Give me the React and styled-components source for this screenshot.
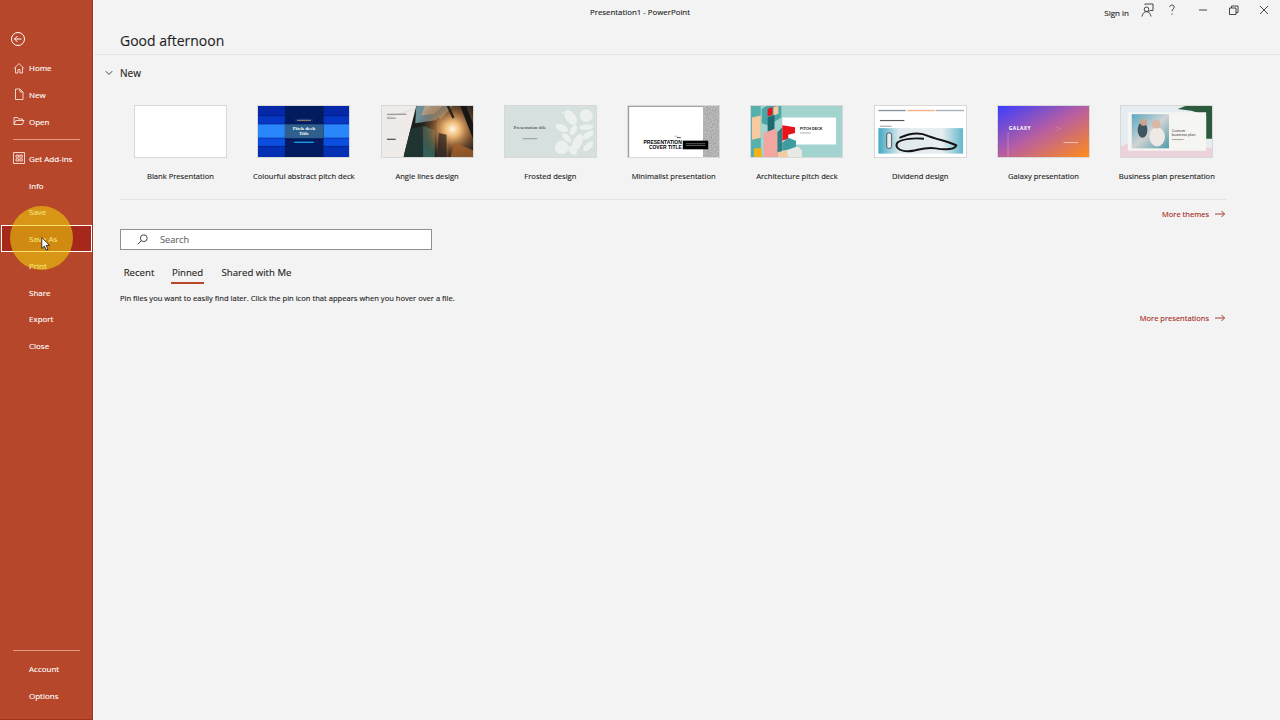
import styled, { createGlobalStyle } from 'styled-components'

const GlobalStyle = createGlobalStyle`
    html, body, #root {
        margin: 0;
        height: 100%;
    }
    body {
        overflow: hidden;
        background-color: #f3f3f3;
        font-family: "Open Sans", "Noto Sans", "Liberation Sans", sans-serif;
        color: #222222;
        -webkit-text-stroke: 0.12px currentColor;
    }
`;

const Page = styled.div`
    width: 1280px;
    height: 720px;
    display: flex;
    flex-direction: row;
    position: relative;
    overflow: hidden;
`;

const Sidebar = styled.nav`
    width: 92px;
    height: 719px;
    flex-shrink: 0;
    display: flex;
    flex-direction: column;
    background-color: #b7472a;
    border-right: 1px solid #a5301c;
    border-bottom: 1px solid #a5301c;
    color: #ffffff;
`;

const BackButton = styled.div`
    height: 24px;
    margin: 27px 0 3.600px 11px;
    display: flex;
    align-items: center;
`;

const SideItem = styled.div`
    height: 26.7px;
    flex-shrink: 0;
    display: flex;
    align-items: center;
    position: relative;
    font-size: 8px;
    box-sizing: border-box;
    background-color: ${p => (p.$active ? '#a5281b' : 'transparent')};
    outline: ${p => (p.$active ? '1px solid #ffffff' : 'none')};
    outline-offset: -1px;
    margin-left: ${p => (p.$active ? '1px' : '0')};
    padding-left: ${p => (p.$active ? '28px' : '29px')};
`;

const SideIcon = styled.svg`
    position: absolute;
    left: 13px;
    top: 7px;
    width: 12px;
    height: 12px;
    fill: none;
    stroke: #f7e3dc;
    stroke-width: 0.9;
`;

const SideDivider = styled.div`
    height: 1px;
    width: 67px;
    margin: ${p => p.$margin};
    background-color: #e59a82;
`;

const BottomGroup = styled.div`
    margin-top: auto;
    padding-bottom: 10px;
`;

const Spotlight = styled.div`
    position: absolute;
    left: 10px;
    top: 206px;
    width: 63px;
    height: 64px;
    border-radius: 50%;
    background-color: rgba(238, 204, 12, 0.6);
    pointer-events: none;
`;

const Cursor = styled.svg`
    position: absolute;
    left: 40.500px;
    top: 236.500px;
    width: 9px;
    height: 14px;
    pointer-events: none;
`;

const Main = styled.main`
    flex: 1;
    min-width: 0;
    display: flex;
    flex-direction: column;
    border-left: 1px solid #fbfbfb;
`;

const TitleBar = styled.header`
    height: 24px;
    display: flex;
    align-items: center;
    padding-left: 496px;
    font-size: 7.85px;
`;

const WindowTitle = styled.span`
    white-space: nowrap;
`;

const WindowActions = styled.div`
    margin-left: auto;
    display: flex;
    align-items: center;
`;

const SignIn = styled.span`
    margin-right: 3px;
    font-size: 8px;
`;

const WindowIcon = styled.svg`
    width: ${p => p.$width || '30px'};
    height: 14px;
    fill: none;
    stroke: #333333;
    stroke-width: 0.9;
    margin: -4px ${p => p.$gap || '0'} 0 0;
`;

const Greeting = styled.div`
    height: 31px;
    display: flex;
    align-items: center;
    padding: 2px 0 0 26px;
    font-size: 14px;
    color: #1f1f1f;
    border-bottom: 1px solid #e6e6e6;
    box-sizing: border-box;
`;

const Content = styled.section`
    padding: 0 54px 0 26px;
    display: flex;
    flex-direction: column;
`;

const SectionHeader = styled.div`
    height: 36px;
    display: flex;
    align-items: center;
    font-size: 10px;
    position: relative;
`;

const Chevron = styled.svg`
    position: absolute;
    left: -15px;
    top: 15px;
    width: 8px;
    height: 6px;
    fill: none;
    stroke: #444444;
    stroke-width: 1;
`;

const TemplateRow = styled.div`
    display: grid;
    grid-template-columns: repeat(9, 123.3px);
    margin: 14px 0 0 -1.2px;
    height: 94px;
`;

const Template = styled.div`
    display: flex;
    flex-direction: column;
    align-items: center;
`;

const Thumb = styled.svg`
    width: 91px;
    height: 51px;
    margin: 1px;
    display: block;
    box-shadow: 0 0 0 1px #d8d8d8;
    background-color: #ffffff;
`;

const Caption = styled.span`
    margin-top: 13px;
    font-size: 7.6px;
    line-height: 11px;
    color: #222222;
    white-space: nowrap;
`;

const RowDivider = styled.div`
    height: 1px;
    background-color: #e3e3e3;
`;

const MoreLink = styled.div`
    display: flex;
    justify-content: flex-end;
    align-items: center;
    gap: 6px;
    font-size: 7.55px;
    color: #a5281b;
    height: 12px;
    padding-right: 1px;
    margin-top: ${p => p.$top};
`;

const Arrow = styled.svg`
    width: 10px;
    height: 8px;
    fill: none;
    stroke: #a5281b;
    stroke-width: 0.9;
`;

const SearchBox = styled.div`
    width: 312px;
    height: 21px;
    margin-top: 9px;
    display: flex;
    align-items: center;
    background-color: #ffffff;
    border: 1px solid #8f8f8f;
    box-sizing: border-box;
    padding-left: 16px;
    gap: 12px;
    font-size: 9.2px;
    color: #666666;
`;

const SearchIcon = styled.svg`
    width: 11px;
    height: 11px;
    fill: none;
    stroke: #444444;
    stroke-width: 1;
`;

const Tabs = styled.div`
    display: flex;
    margin-top: 13px;
    padding-left: 4px;
    height: 21px;
    font-size: 9.6px;
`;

const Tab = styled.div`
    display: flex;
    align-items: flex-start;
    justify-content: center;
    box-sizing: border-box;
    white-space: nowrap;
    width: ${p => p.$width};
    margin-right: ${p => p.$gap};
    height: 21px;
    padding-top: 3px;
    line-height: 14px;
    border-bottom: ${p => (p.$active ? '2px solid #b7472a' : '0')};
`;

const Hint = styled.p`
    margin: 9px 0 0;
    font-size: 7.6px;
    line-height: 11px;
    color: #222222;
    white-space: nowrap;
`;

const navTop = [
    {
        label: 'Home',
        icon: <path d="M1 6.500 6 1.500l5 5M2.500 5.500V11H5V7.500h2V11h2.500V5.500" />,
    },
    {
        label: 'New',
        icon: <path d="M2.500 1h4.500l3 3v7.500h-7.500zM7 1v3h3" />,
    },
    {
        label: 'Open',
        icon: <path d="M1 9.500V2.500h3.500l1 1.500h4v1.500M1 9.500l1.800-4h8.200l-1.800 4z" />,
    },
];

const navMiddle = [
    {
        label: 'Get Add-ins',
        icon: <path d="M.5.500h11v11H.5zM3 3h2.500v2.200H3zM6.800 3h2.500v2.200H6.800zM3 6.800h2.500V9H3zM6.800 6.800h2.500V9H6.800z" />,
    },
    { label: 'Info' },
    { label: 'Save' },
    { label: 'Save As', active: true },
    { label: 'Print' },
    { label: 'Share' },
    { label: 'Export' },
    { label: 'Close' },
];

const templates = [
    { name: 'Blank Presentation', art: null },
    { name: 'Colourful abstract pitch deck', art: <PitchDeckArt /> },
    { name: 'Angle lines design', art: <AngleLinesArt /> },
    { name: 'Frosted design', art: <FrostedArt /> },
    { name: 'Minimalist presentation', art: <MinimalistArt /> },
    { name: 'Architecture pitch deck', art: <ArchitectureArt /> },
    { name: 'Dividend design', art: <DividendArt /> },
    { name: 'Galaxy presentation', art: <GalaxyArt /> },
    { name: 'Business plan presentation', art: <BusinessArt /> },
];

function PitchDeckArt() {
    const stripes = [
        [0, 10, '#0428a8'], [10.500, 8, '#0636c4'], [19, 14, '#2a86fb'],
        [33.500, 8, '#0a4fe0'], [42, 11, '#0430b4'],
    ];
    return (
        <>
            <rect width="93" height="53" fill="#03136e" />
            {stripes.map(([y, h, c]) => (
                <rect key={y} x="0" y={y} width="93" height={h} fill={c} />
            ))}
            <rect x="27.500" y="0" width="39.500" height="53" fill="#021a5e" />
            <rect x="27.500" y="19" width="39.500" height="14.500" fill="#2f5f8c" />
            <rect x="37.500" y="13" width="19" height="3.500" fill="#0a2a70" />
            <rect x="40" y="14.400" width="14" height="0.800" fill="#e0a060" />
            <text x="47" y="24.500" fontSize="5.200" fontFamily="Liberation Serif" fill="#fff" textAnchor="middle" fontWeight="bold">Pitch deck</text>
            <text x="47" y="30.300" fontSize="5.200" fontFamily="Liberation Serif" fill="#fff" textAnchor="middle" fontWeight="bold">Title</text>
            <rect x="37" y="37" width="20" height="1.400" fill="#1d9ff0" />
        </>
    );
}

function AngleLinesArt() {
    return (
        <>
            <defs>
                <radialGradient id="sun" gradientUnits="userSpaceOnUse" cx="72" cy="24" r="36">
                    <stop offset="0" stopColor="#fff8e4" />
                    <stop offset="0.22" stopColor="#f8c078" stopOpacity="0.95" />
                    <stop offset="0.55" stopColor="#b8723a" stopOpacity="0.6" />
                    <stop offset="1" stopColor="#3a2c20" stopOpacity="0" />
                </radialGradient>
                <clipPath id="photoClip">
                    <polygon points="35,0 93,0 93,53 22,53" />
                </clipPath>
            </defs>
            <rect width="93" height="53" fill="#efebe9" />
            <g clipPath="url(#photoClip)">
                <rect width="93" height="53" fill="#1a1d1e" />
                <polygon points="35,0 72,0 60,14 34,18" fill="#6e8f96" />
                <polygon points="44,0 62,0 54,8 40,10" fill="#b9a48a" />
                <polygon points="28,24 46,20 50,53 20,53" fill="#1f3331" />
                <polygon points="42,21 54,25 54,53 42,53" fill="#33615a" />
                <polygon points="56,12 66,15 68,53 56,53" fill="#4a4038" />
                <rect width="93" height="53" fill="url(#sun)" />
                <polygon points="80,0 86,0 93,18 93,34" fill="#171513" />
                <polygon points="66,0 69,0 74,12 72,13" fill="#2a2118" />
                <polygon points="58,28 66,30 66,53 56,53" fill="#2c2620" opacity="0.75" />
                <polygon points="74,38 93,46 93,53 70,53" fill="#a4622a" opacity="0.8" />
            </g>
            <polygon points="5,11 34,3 34,4 5,12" fill="#dcd8d5" />
            <rect x="5" y="8" width="20" height="1.300" fill="#9a9a9a" />
            <rect x="5" y="12" width="9" height="1.300" fill="#9a9a9a" />
            <rect x="5" y="34" width="9" height="1.200" fill="#444" />
        </>
    );
}

function FrostedArt() {
    const leaves = [
        [67, 12, 5, 9, -35], [83, 10, 6.500, 6.500, 50], [58, 23, 3.500, 7, -65], [83, 22, 3, 7, 85],
        [70, 25, 3, 5.500, 30], [58, 43, 7, 7, 40], [74, 38, 4.500, 9.500, 25], [85, 30, 3, 6.500, 55],
        [85, 42, 3, 6.500, 45], [63, 33, 3, 6, -45], [59, 7, 1, 1, 0], [69, 46, 3.500, 5.500, -40],
    ];
    return (
        <>
            <rect width="93" height="53" fill="#d6e1df" />
            {leaves.map(([cx, cy, rx, ry, a]) => (
                <ellipse key={`${cx}-${cy}`} cx={cx} cy={cy} rx={rx} ry={ry} fill="#ecf1f0" transform={`rotate(${a} ${cx} ${cy})`} />
            ))}
            <text x="9" y="23.500" fontSize="4.900" fontFamily="Liberation Serif" fill="#222">Presentation title</text>
            <rect x="18" y="33.500" width="15" height="1" fill="#8f9a98" />
        </>
    );
}

function MinimalistArt() {
    return (
        <>
            <defs>
                <filter id="grain" x="0" y="0" width="100%" height="100%">
                    <feTurbulence type="fractalNoise" baseFrequency="0.8" numOctaves="2" />
                    <feColorMatrix type="saturate" values="0" />
                    <feComponentTransfer>
                        <feFuncR type="linear" slope="0.500" intercept="0.200" />
                        <feFuncG type="linear" slope="0.500" intercept="0.200" />
                        <feFuncB type="linear" slope="0.500" intercept="0.200" />
                        <feFuncA type="linear" slope="0" intercept="1" />
                    </feComponentTransfer>
                </filter>
            </defs>
            <rect width="93" height="53" fill="#ffffff" />
            <rect width="1.200" height="53" fill="#a0a0a0" />
            <rect width="93" height="1" fill="#a0a0a0" />
            <rect x="77" width="16" height="53" fill="#777" filter="url(#grain)" />
            <rect x="56" y="36" width="26" height="9" fill="#000" />
            <rect x="59" y="39" width="20" height="0.600" fill="#999" />
            <rect x="59" y="41" width="20" height="0.600" fill="#999" />
            <text x="55" y="39.600" fontSize="5.100" fontFamily="Liberation Sans" fontWeight="bold" fill="#000" textAnchor="end">PRESENTATION</text>
            <text x="55" y="44.800" fontSize="5.100" fontFamily="Liberation Sans" fontWeight="bold" fill="#000" textAnchor="end">COVER TITLE</text>
            <rect x="47" y="31" width="4" height="0.600" fill="#999" />
            <rect x="50" y="32.500" width="4" height="0.800" fill="#222" />
        </>
    );
}

function ArchitectureArt() {
    return (
        <>
            <rect width="93" height="53" fill="#a3d3cf" />
            <rect x="32" y="12" width="55" height="28" fill="#ffffff" />
            <text x="50" y="24.500" fontSize="3.800" fontFamily="Liberation Sans" fontWeight="bold" fill="#111">PITCH DECK</text>
            <rect x="50" y="27.500" width="11" height="1" fill="#aaa" />
            <rect x="0" y="0" width="10" height="53" fill="#56b0ae" />
            <polygon points="1,12 10,10 10,33 1,35" fill="#f6cba0" />
            <polygon points="11,3 16,0 31,0 31,12 18,20 11,18" fill="#4aa6a6" />
            <polygon points="17,3 22,1 22,9 17,11" fill="#e8141c" />
            <polygon points="23,1 28,0 28,8 23,10" fill="#f6cba0" />
            <polygon points="17,12 24,9 24,24 17,28" fill="#1f6a70" />
            <polygon points="13,28 24,24 27,27 27,53 13,53" fill="#f3a6a0" />
            <polygon points="27,27 32,22 32,46 27,53" fill="#2f7f84" />
            <polygon points="32,20 45,22 45,28 38,30 38,34 32,36" fill="#e8141c" />
            <polygon points="38,33 46,36 46,42 38,46 32,46 32,38" fill="#3f9ca0" />
            <polygon points="36,46 48,42 52,46 52,53 38,53" fill="#e8e8e4" />
            <polygon points="3,44 11,44 11,53 3,53" fill="#f2b21c" />
            <polygon points="27,48 36,46 38,53 27,53" fill="#f6cba0" />
        </>
    );
}

function DividendArt() {
    return (
        <>
            <defs>
                <linearGradient id="desk" x1="0" y1="0" x2="1" y2="0">
                    <stop offset="0" stopColor="#42a9c2" />
                    <stop offset="0.25" stopColor="#dfe9ee" />
                    <stop offset="0.75" stopColor="#e8eef1" />
                    <stop offset="1" stopColor="#62b6cb" />
                </linearGradient>
            </defs>
            <rect width="93" height="53" fill="#ffffff" />
            <rect x="3.500" y="4" width="28" height="1.400" fill="#8b95a1" />
            <rect x="33" y="4" width="28" height="1.400" fill="#f4b183" />
            <rect x="62" y="4" width="29" height="1.400" fill="#a5adb5" />
            <rect x="5" y="14.500" width="25" height="1.200" fill="#555" />
            <rect x="5" y="20.500" width="12" height="1" fill="#999" />
            <rect x="3.500" y="23" width="86.500" height="26.500" fill="url(#desk)" />
            <path d="M25 33C36 28 46 27 54 31 64 35 76 37 83 41 82 45 72 46 62 44 50 42 42 47 34 47 24 47 20 42 23 38 28 34 40 33 50 34" fill="none" stroke="#141414" strokeWidth="2" />
            <rect x="12" y="28" width="5" height="16" rx="2" fill="#e8edf0" stroke="#333" strokeWidth="0.8" />
        </>
    );
}

function GalaxyArt() {
    return (
        <>
            <defs>
                <linearGradient id="galaxy" x1="0" y1="0" x2="1" y2="1">
                    <stop offset="0" stopColor="#3a3dff" />
                    <stop offset="0.5" stopColor="#b95f9f" />
                    <stop offset="1" stopColor="#ff8c1a" />
                </linearGradient>
            </defs>
            <rect width="93" height="53" fill="url(#galaxy)" />
            <text x="11" y="25" fontSize="5" fontFamily="Open Sans" fontWeight="bold" fill="#fff" letterSpacing="0.500">GALAXY</text>
            <rect x="67" y="37.500" width="15" height="1" fill="#f8d9c6" opacity="0.8" />
            <rect x="10" y="27" width="0.500" height="26" fill="#ffffff" opacity="0.5" />
            <circle cx="61" cy="22" r="0.400" fill="#fff" />
            <circle cx="63.500" cy="23.500" r="0.400" fill="#fff" />
            <circle cx="61" cy="25" r="0.400" fill="#fff" />
        </>
    );
}

function BusinessArt() {
    return (
        <>
            <defs>
                <linearGradient id="team" x1="0" y1="0" x2="1" y2="1">
                    <stop offset="0" stopColor="#5aa8c0" />
                    <stop offset="0.5" stopColor="#cfd3d4" />
                    <stop offset="1" stopColor="#4f9aa8" />
                </linearGradient>
            </defs>
            <rect width="93" height="53" fill="#e6edf1" />
            <polygon points="0,42 18,34 93,44 93,53 0,53" fill="#ecd3da" />
            <polygon points="58,3 66,0 93,0 93,34 87,34 87,10 72,5" fill="#2c5a3c" />
            <rect x="7" y="6.500" width="80" height="40" fill="#f5f5f2" />
            <rect x="11" y="8.500" width="38" height="35.500" fill="url(#team)" />
            <ellipse cx="22" cy="25" rx="5" ry="8" fill="#3f5560" />
            <circle cx="23" cy="17" r="3.500" fill="#cda48e" />
            <ellipse cx="37" cy="32" rx="8" ry="10" fill="#eee9e4" />
            <circle cx="36" cy="19" r="4.500" fill="#d9b8a5" />
            <text x="52" y="27" fontSize="3.800" fontFamily="Open Sans" fill="#222">Custom</text>
            <text x="52" y="31.500" fontSize="3.800" fontFamily="Open Sans" fill="#222">business plan</text>
            <rect x="52" y="34.500" width="12" height="0.900" fill="#999" />
        </>
    );
}

function App() {
    return (
        <Page>
            <GlobalStyle />
            <Sidebar>
                <BackButton>
                    <svg width="14" height="14" viewBox="0 0 14 14" fill="none" stroke="#ffffff" strokeWidth="1">
                        <circle cx="7" cy="7" r="6.500" />
                        <path d="M10.500 7H3.500M6.500 4 3.500 7l3 3" />
                    </svg>
                </BackButton>
                {navTop.map(item => (
                    <SideItem key={item.label}>
                        <SideIcon viewBox="0 0 12 12">{item.icon}</SideIcon>
                        {item.label}
                    </SideItem>
                ))}
                <SideDivider $margin="4px 0 5.600px 13px" />
                {navMiddle.map(item => (
                    <SideItem key={item.label} $active={item.active}>
                        {item.icon && <SideIcon viewBox="0 0 12 12">{item.icon}</SideIcon>}
                        {item.label}
                    </SideItem>
                ))}
                <BottomGroup>
                    <SideDivider $margin="0 0 5px 13px" />
                    <SideItem>Account</SideItem>
                    <SideItem>Options</SideItem>
                </BottomGroup>
            </Sidebar>
            <Spotlight />
            <Cursor viewBox="0 0 9 14">
                <path d="M.8.600v10.800l2.600-2.300 1.800 4 1.800-.8-1.800-3.900h3.400z" fill="#ffffff" stroke="#111111" strokeWidth="0.8" />
            </Cursor>
            <Main>
                <TitleBar>
                    <WindowTitle>Presentation1 - PowerPoint</WindowTitle>
                    <WindowActions>
                        <SignIn>Sign in</SignIn>
                        <WindowIcon viewBox="0 0 30 14">
                            <path d="M13 2V1h8v6.500h-3l-1.500 1.500M14.500 4a2.300 2.300 0 1 1 0 4.600 2.300 2.300 0 0 1 0-4.600zM10 13.500c.5-3 2.300-4.900 4.500-4.900s4 1.900 4.500 4.900" />
                        </WindowIcon>
                        <WindowIcon viewBox="0 0 20 14" $width="20px" $gap="6px">
                            <path d="M7.800 4c0-2.600 4.400-2.600 4.400 0 0 2-2.200 2-2.200 4.300M10 10.500v1.200" />
                        </WindowIcon>
                        <WindowIcon viewBox="0 0 30 14">
                            <path d="M11 7h8" />
                        </WindowIcon>
                        <WindowIcon viewBox="0 0 30 14">
                            <path d="M11.500 5h6.500v6.500h-6.500zM13.500 5V3h6.500v6.500h-2" />
                        </WindowIcon>
                        <WindowIcon viewBox="0 0 30 14" $gap="2px">
                            <path d="M12 3l8 8M20 3l-8 8" />
                        </WindowIcon>
                    </WindowActions>
                </TitleBar>
                <Greeting>Good afternoon</Greeting>
                <Content>
                    <SectionHeader>
                        <Chevron viewBox="0 0 8 6"><path d="M.8 1.200 4 4.400l3.200-3.200" /></Chevron>
                        New
                    </SectionHeader>
                    <TemplateRow>
                        {templates.map(t => (
                            <Template key={t.name}>
                                <Thumb viewBox="0 0 93 53" preserveAspectRatio="none">{t.art}</Thumb>
                                <Caption>{t.name}</Caption>
                            </Template>
                        ))}
                    </TemplateRow>
                    <RowDivider />
                    <MoreLink $top="8px">
                        More themes
                        <Arrow viewBox="0 0 10 8"><path d="M0 4h9.500M6.500 1l3 3-3 3" /></Arrow>
                    </MoreLink>
                    <SearchBox>
                        <SearchIcon viewBox="0 0 11 11">
                            <circle cx="6.800" cy="4.200" r="3.400" />
                            <path d="M4.300 6.700.8 10.200" />
                        </SearchIcon>
                        Search
                    </SearchBox>
                    <Tabs>
                        <Tab $width="30px" $gap="17px">Recent</Tab>
                        <Tab $width="33px" $gap="18px" $active>Pinned</Tab>
                        <Tab $width="69px" $gap="0">Shared with Me</Tab>
                    </Tabs>
                    <Hint>Pin files you want to easily find later. Click the pin icon that appears when you hover over a file.</Hint>
                    <MoreLink $top="8px">
                        More presentations
                        <Arrow viewBox="0 0 10 8"><path d="M0 4h9.500M6.500 1l3 3-3 3" /></Arrow>
                    </MoreLink>
                </Content>
            </Main>
        </Page>
    );
}

export default App;
